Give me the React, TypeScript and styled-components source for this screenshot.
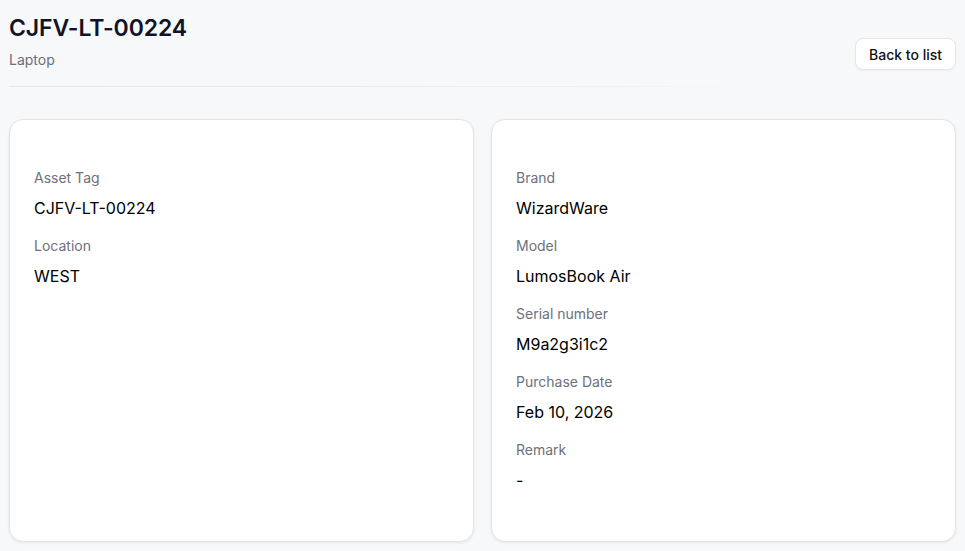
import React from "react";
import styled, { createGlobalStyle } from "styled-components";

const Global = createGlobalStyle`
  html, body { margin: 0; padding: 0; background: #f7f8fa; }
  body { font-family: Inter, "Noto Sans", sans-serif; color: #0b0b0f; }
  * { box-sizing: border-box; }
`;

const Page = styled.div`
  padding: 12px 9px 9px 9px;
`;

const Header = styled.header`
  display: flex;
  justify-content: space-between;
  align-items: flex-end;
`;

const TitleBlock = styled.div`
  display: flex;
  flex-direction: column;
  gap: 6px;
`;

const Title = styled.h1`
  margin: 0;
  font-size: 23px;
  line-height: 32px;
  font-weight: 600;
  color: #111427;
  letter-spacing: -0.1px;
`;

const Subtitle = styled.div`
  font-size: 14px;
  line-height: 20px;
  color: #6b6f78;
`;

const Button = styled.button`
  height: 32px;
  padding: 0 13px;
  border: 1px solid #e4e6ea;
  border-radius: 8px;
  background: #ffffff;
  font-family: Inter, "Noto Sans", sans-serif;
  font-size: 14px;
  font-weight: 500;
  color: #111;
  box-shadow: 0 1px 2px rgba(0, 0, 0, 0.04);
  cursor: pointer;
`;

const Divider = styled.div`
  height: 1px;
  margin-top: 16px;
  background: linear-gradient(to right, #e6e8ee 0%, #eceef2 55%, rgba(236, 238, 242, 0) 80%);
`;

const Grid = styled.div`
  margin-top: 32px;
  display: grid;
  grid-template-columns: 1fr 1fr;
  gap: 17px;
`;

const Card = styled.section`
  background: #ffffff;
  border: 1px solid #e3e4e7;
  border-radius: 14px;
  box-shadow: 0 1px 3px rgba(0, 0, 0, 0.07);
  padding: 48px 24px 33px 24px;
`;

const Field = styled.div`
  display: flex;
  flex-direction: column;
  gap: 8px;
  margin-bottom: 16px;
`;

const Label = styled.div`
  font-size: 14px;
  line-height: 20px;
  color: #6d717a;
`;

const Value = styled.div`
  font-size: 16px;
  line-height: 24px;
  font-weight: 400;
  color: #000000;
`;

const left = [
  ["Asset Tag", "CJFV-LT-00224"],
  ["Location", "WEST"],
];
const right = [
  ["Brand", "WizardWare"],
  ["Model", "LumosBook Air"],
  ["Serial number", "M9a2g3i1c2"],
  ["Purchase Date", "Feb 10, 2026"],
  ["Remark", "-"],
];

export default function App() {
  return (
    <>
      <Global />
      <Page>
        <Header>
          <TitleBlock>
            <Title>CJFV-LT-00224</Title>
            <Subtitle>Laptop</Subtitle>
          </TitleBlock>
          <Button>Back to list</Button>
        </Header>
        <Divider />
        <Grid>
          <Card>
            {left.map(([l, v]) => (
              <Field key={l}>
                <Label>{l}</Label>
                <Value>{v}</Value>
              </Field>
            ))}
          </Card>
          <Card>
            {right.map(([l, v]) => (
              <Field key={l}>
                <Label>{l}</Label>
                <Value>{v}</Value>
              </Field>
            ))}
          </Card>
        </Grid>
      </Page>
    </>
  );
}
